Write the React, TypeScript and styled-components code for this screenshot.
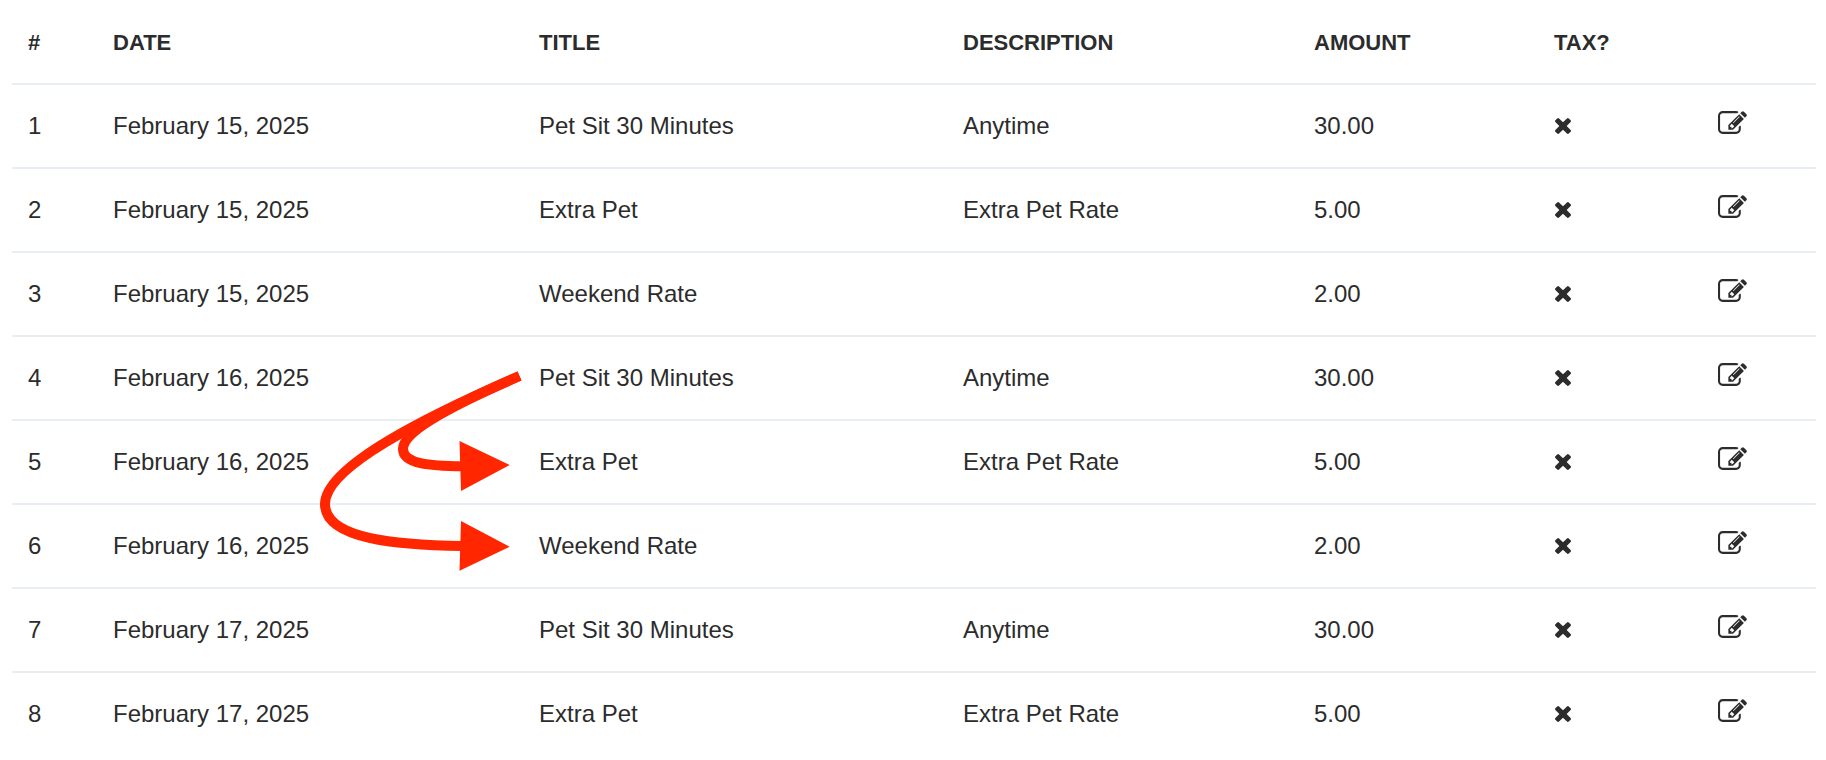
import React from "react";
import styled, { createGlobalStyle } from "styled-components";

const GlobalStyle = createGlobalStyle`
  body {
    margin: 0;
    background: #ffffff;
    color: #2c2c2c;
    font-family: "Liberation Sans", Arial, sans-serif;
  }
`;

const Page = styled.main`
  padding: 0 10px 0 12px;
`;

const Table = styled.table`
  width: 100%;
  table-layout: fixed;
  border-collapse: separate;
  border-spacing: 0;
`;

const Col = styled.col<{ $width: number }>`
  width: ${({ $width }) => $width}px;
`;

const HeadCell = styled.th`
  padding: 29px 16px 26px;
  border-bottom: 2px solid #e9eef4;
  font-size: 22px;
  line-height: 28px;
  font-weight: 700;
  text-align: left;
  text-transform: uppercase;
`;

const Row = styled.tr`
  &:not(:last-child) > td {
    border-bottom: 2px solid #e9eef4;
  }
`;

const Cell = styled.td`
  position: relative;
  height: 28px;
  padding: 27px 16px;
  font-size: 24px;
  line-height: 28px;
  text-align: left;
`;

const ActionCell = styled(Cell)`
  padding: 26px 16px 28px;
`;

const CrossIcon = styled.svg`
  display: block;
  width: 16px;
  height: 16px;
  margin-left: 1px;
  fill: currentColor;
`;

const EditButton = styled.button`
  display: block;
  margin: 0;
  padding: 0 0 5px;
  border: 0;
  background: none;
  color: inherit;
  cursor: pointer;
`;

const EditIcon = styled.svg`
  display: block;
  width: 29px;
  height: 23px;
  fill: currentColor;
`;

const Arrows = styled.svg`
  position: absolute;
  z-index: 1;
  top: 0;
  right: 100%;
  width: 210px;
  height: 240px;
  pointer-events: none;
`;

const columns = [
  { label: "#", width: 85 },
  { label: "Date", width: 426 },
  { label: "Title", width: 424 },
  { label: "Description", width: 351 },
  { label: "Amount", width: 240 },
  { label: "Tax?", width: 164 },
  { label: "", width: 114 },
];

const services = [
  { title: "Pet Sit 30 Minutes", description: "Anytime", amount: "30.00" },
  { title: "Extra Pet", description: "Extra Pet Rate", amount: "5.00" },
  { title: "Weekend Rate", description: "", amount: "2.00" },
];

const dates = ["February 15, 2025", "February 16, 2025", "February 17, 2025"];

const items = dates
  .flatMap((date) => services.map((service) => ({ date, ...service })))
  .slice(0, 8)
  .map((item, index) => ({ id: index + 1, ...item }));

const LINKED_ITEM = 4;

function LinkArrows() {
  return (
    <Arrows viewBox="313 337 210 240" aria-hidden="true">
      <g fill="none" stroke="#ff2600" strokeWidth="10">
        <path d="M519.5 376C432 414 325 466 325 504C325 540 400 545 463 546" />
        <path d="M519.5 376C455 404 403 430 403 449C403 464 430 466 463 466.3" />
      </g>
      <path
        fill="#ff2600"
        d="M459.5 441L509.7 465L461 491ZM461 521L509.7 546.7L459.5 570.7Z"
      />
    </Arrows>
  );
}

function Cross() {
  return (
    <CrossIcon viewBox="302 366 1188 1188" role="img" aria-label="Not taxed">
      <path d="M1490 1322q0 40-28 68l-136 136q-28 28-68 28t-68-28l-294-294-294 294q-28 28-68 28t-68-28l-136-136q-28-28-28-68t28-68l294-294-294-294q-28-28-28-68t28-68l136-136q28-28 68-28t68 28l294 294 294-294q28-28 68-28t68 28l136 136q28 28 28 68t-28 68l-294 294 294 294q28 28 28 68z" />
    </CrossIcon>
  );
}

function PencilSquare() {
  return (
    <EditIcon viewBox="0 128 1792 1408" aria-hidden="true">
      <path d="M888 1184l116-116-152-152-116 116v56h96v96h56zM1328 464q-16-16-33 1l-350 350q-17 17-1 33t33-1l350-350q17-17 1-33zM1408 1058v190q0 119-84.5 203.5t-203.5 84.5h-832q-119 0-203.5-84.5t-84.5-203.5v-832q0-119 84.5-203.5t203.5-84.5h832q63 0 117 25 15 7 18 23 3 17-9 29l-49 49q-14 14-32 8-23-6-45-6h-832q-66 0-113 47t-47 113v832q0 66 47 113t113 47h832q66 0 113-47t47-113v-126q0-13 9-22l64-64q15-15 35-7t20 29zM1312 320l288 288-672 672h-288v-288zM1756 452l-92 92-288-288 92-92q28-28 68-28t68 28l152 152q28 28 28 68t-28 68z" />
    </EditIcon>
  );
}

export default function App() {
  return (
    <Page>
      <GlobalStyle />
      <Table>
        <colgroup>
          {columns.map((column, index) => (
            <Col key={index} $width={column.width} />
          ))}
        </colgroup>
        <thead>
          <tr>
            {columns.map((column, index) => (
              <HeadCell key={index} scope="col">
                {column.label}
              </HeadCell>
            ))}
          </tr>
        </thead>
        <tbody>
          {items.map((item) => (
            <Row key={item.id}>
              <Cell>{item.id}</Cell>
              <Cell>{item.date}</Cell>
              <Cell>
                {item.title}
                {item.id === LINKED_ITEM && <LinkArrows />}
              </Cell>
              <Cell>{item.description}</Cell>
              <Cell>{item.amount}</Cell>
              <Cell>
                <Cross />
              </Cell>
              <ActionCell>
                <EditButton type="button" aria-label={`Edit item ${item.id}`}>
                  <PencilSquare />
                </EditButton>
              </ActionCell>
            </Row>
          ))}
        </tbody>
      </Table>
    </Page>
  );
}
